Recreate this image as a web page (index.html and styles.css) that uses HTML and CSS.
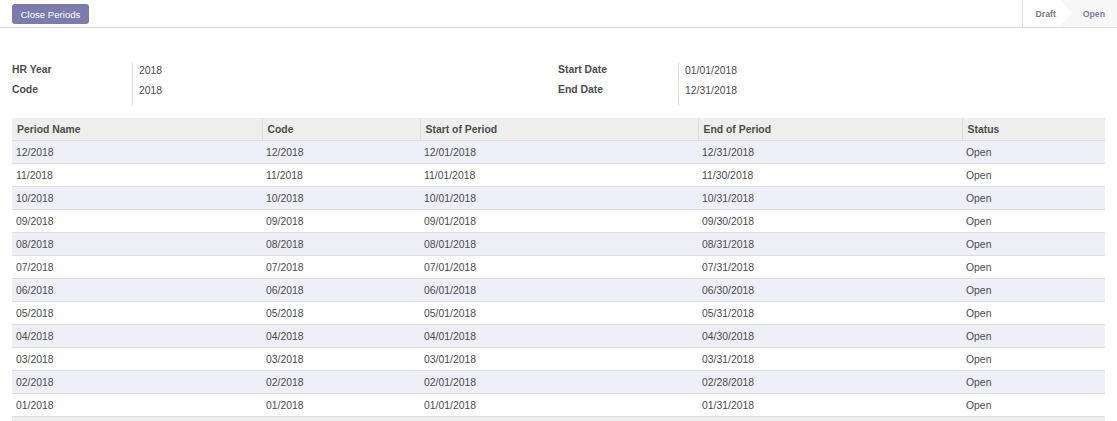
FILE: index.html
```html
<!DOCTYPE html>
<html>
<head>
<meta charset="utf-8">
<link rel="stylesheet" href="styles.css">
</head>
<body>
<div class="topbar">
  <button class="btn-primary">Close Periods</button>
  <div class="statusbar">
    <span class="step step-draft">Draft</span>
    <span class="step step-open">Open</span>
  </div>
</div>
<div class="sheet">
  <div class="form">
    <div class="group">
      <div class="labels">
        <div class="lbl">HR Year</div>
        <div class="lbl">Code</div>
      </div>
      <div class="values">
        <div class="val">2018</div>
        <div class="val">2018</div>
      </div>
    </div>
    <div class="group">
      <div class="labels">
        <div class="lbl">Start Date</div>
        <div class="lbl">End Date</div>
      </div>
      <div class="values">
        <div class="val">01/01/2018</div>
        <div class="val">12/31/2018</div>
      </div>
    </div>
  </div>
  <table class="list">
    <colgroup>
      <col class="c1"><col class="c2"><col class="c3"><col class="c4"><col class="c5">
    </colgroup>
    <thead>
      <tr><th>Period Name</th><th>Code</th><th>Start of Period</th><th>End of Period</th><th>Status</th></tr>
    </thead>
    <tbody>
      <tr><td>12/2018</td><td>12/2018</td><td>12/01/2018</td><td>12/31/2018</td><td>Open</td></tr>
      <tr><td>11/2018</td><td>11/2018</td><td>11/01/2018</td><td>11/30/2018</td><td>Open</td></tr>
      <tr><td>10/2018</td><td>10/2018</td><td>10/01/2018</td><td>10/31/2018</td><td>Open</td></tr>
      <tr><td>09/2018</td><td>09/2018</td><td>09/01/2018</td><td>09/30/2018</td><td>Open</td></tr>
      <tr><td>08/2018</td><td>08/2018</td><td>08/01/2018</td><td>08/31/2018</td><td>Open</td></tr>
      <tr><td>07/2018</td><td>07/2018</td><td>07/01/2018</td><td>07/31/2018</td><td>Open</td></tr>
      <tr><td>06/2018</td><td>06/2018</td><td>06/01/2018</td><td>06/30/2018</td><td>Open</td></tr>
      <tr><td>05/2018</td><td>05/2018</td><td>05/01/2018</td><td>05/31/2018</td><td>Open</td></tr>
      <tr><td>04/2018</td><td>04/2018</td><td>04/01/2018</td><td>04/30/2018</td><td>Open</td></tr>
      <tr><td>03/2018</td><td>03/2018</td><td>03/01/2018</td><td>03/31/2018</td><td>Open</td></tr>
      <tr><td>02/2018</td><td>02/2018</td><td>02/01/2018</td><td>02/28/2018</td><td>Open</td></tr>
      <tr><td>01/2018</td><td>01/2018</td><td>01/01/2018</td><td>01/31/2018</td><td>Open</td></tr>
    </tbody>
    <tfoot>
      <tr><td></td><td></td><td></td><td></td><td></td></tr>
    </tfoot>
  </table>
</div>
</body>
</html>
```
FILE: styles.css
```css
html, body {
  margin: 0;
  padding: 0;
  background: #ffffff;
}
body {
  font-family: "Liberation Sans", Arial, sans-serif;
  font-size: 10.4px;
  color: #4c4c4c;
  width: 1117px;
  overflow: hidden;
}
.topbar {
  height: 27px;
  border-bottom: 1px solid #dcdcdc;
  display: flex;
  justify-content: space-between;
  align-items: stretch;
}
.btn-primary {
  margin: 4px 0 0 12px;
  height: 20px;
  width: 77px;
  padding: 0;
  border: none;
  border-radius: 3px;
  background: #7c7bad;
  color: #ffffff;
  font-family: "Liberation Sans", Arial, sans-serif;
  font-size: 9.6px;
}
.statusbar {
  display: flex;
  border-left: 1px solid #e2e2e2;
}
.step {
  display: flex;
  align-items: center;
  font-weight: bold;
  font-size: 8.7px;
}
.step-draft {
  position: relative;
  padding: 0 4px 0 13px;
  color: #777777;
  background: #ffffff;
  z-index: 1;
}
.step-draft::after {
  content: "";
  position: absolute;
  top: 0;
  right: -12px;
  border-top: 13.5px solid transparent;
  border-bottom: 13.5px solid transparent;
  border-left: 12px solid #ffffff;
}
.step-open {
  padding: 0 12px 0 23px;
  color: #7c7bad;
  background: #f7f7f7;
}
.sheet {
  padding: 0 12px;
}
.form {
  display: flex;
  padding-top: 35px;
}
.group {
  flex: 0 0 546px;
  display: flex;
}
.labels {
  width: 120px;
  border-right: 1px solid #dcdcdc;
  padding-bottom: 2px;
}
.lbl {
  height: 20px;
  line-height: 14px;
  font-weight: bold;
}
.values {
  padding-left: 6px;
}
.val {
  height: 20px;
  line-height: 15px;
}
.list {
  margin-top: 13px;
  width: 1093px;
  border-collapse: collapse;
  table-layout: fixed;
}
.c1 { width: 250px; }
.c2 { width: 158px; }
.c3 { width: 278px; }
.c4 { width: 264px; }
.c5 { width: 143px; }
.list th {
  background: #eeeeee;
  text-align: left;
  font-weight: bold;
  height: 22px;
  padding: 0 5px;
  border-left: 1px solid #dddddd;
  border-bottom: 1px solid #dddddd;
}
.list th:first-child {
  border-left: none;
}
.list td {
  height: 22px;
  padding: 0 4px;
  border-bottom: 1px solid #dddddd;
  white-space: nowrap;
}
.list tbody tr:nth-child(odd) td {
  background: #efeff7;
}
.list tfoot td {
  background: #eeeeee;
  height: 20px;
  border-bottom: none;
}
```
